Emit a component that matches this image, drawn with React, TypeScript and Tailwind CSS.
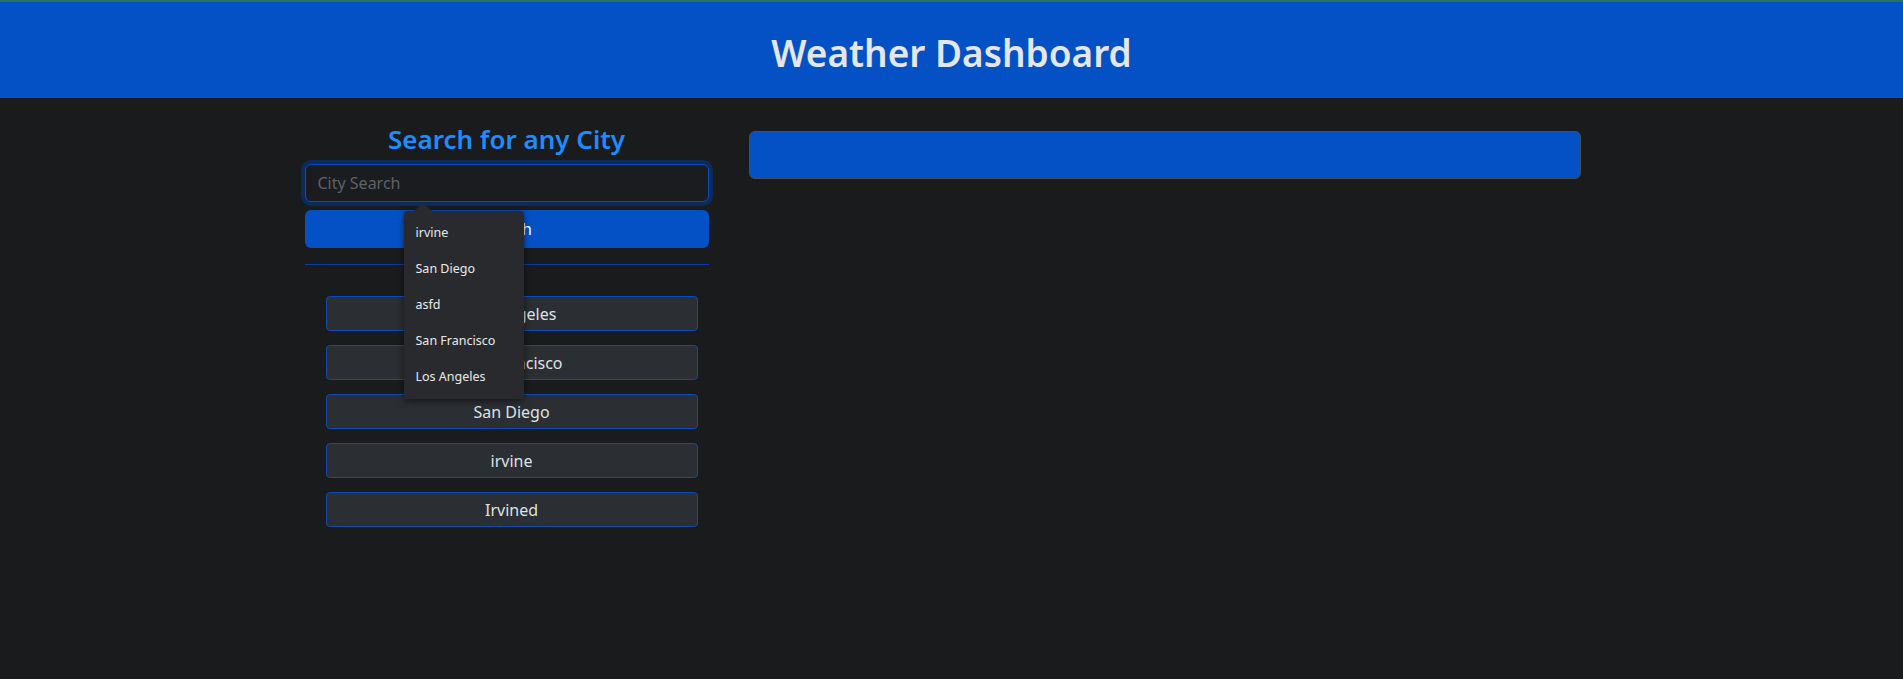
import React from 'react';

const savedCities = ['Los Angeles', 'San Francisco', 'San Diego', 'irvine', 'Irvined'];
const suggestions = ['irvine', 'San Diego', 'asfd', 'San Francisco', 'Los Angeles'];

const SearchPanel: React.FC = () => {
  return (
    <div className="w-[404px] shrink-0 pt-[26px]">
      <h3 className="text-center text-[26px] leading-[1.2] font-semibold text-[#1e8cff]">Search for any City</h3>
      <div className="relative mt-[9px]">
        <input
          type="text"
          placeholder="City Search"
          className="block w-full h-[38px] px-3 rounded-md bg-[#1b1c1f] border border-[#0b4cba] ring-4 ring-[#0c2a5c] text-[16px] text-[#dee2e6] placeholder:text-[#5f6165] outline-none"
        />
        {/* browser datalist popup */}
        <div className="absolute left-[99px] top-[47px] z-10 w-[120px] py-1 rounded-[4px] bg-[#292a2e] shadow-[0_2px_6px_rgba(0,0,0,0.55)]">
          <svg className="absolute left-[10px] -top-[8px]" width="18" height="8" viewBox="0 0 18 8">
            <path d="M0 8 L9 0 L18 8 Z" fill="#292a2e" />
          </svg>
          {suggestions.map((s) => (
            <div key={s} className="h-9 px-3 flex items-center text-[12.5px] text-[#e8eaed]">
              {s}
            </div>
          ))}
        </div>
      </div>
      <button className="mt-2 w-full h-[38px] rounded-md bg-[#0351c4] text-[16px] text-white">Search</button>
      <hr className="mt-4 border-0 border-t border-[#0b3d9c]" />
      <div className="mt-[31px] pl-[21px] pr-[11px] flex flex-col gap-[14px]">
        {savedCities.map((city) => (
          <button
            key={city}
            className="h-[35px] w-full rounded-[4px] bg-[#2b2e32] border border-[#0b4cba] text-[16px] text-[#dee2e6]"
          >
            {city}
          </button>
        ))}
      </div>
    </div>
  );
};

const App: React.FC = () => {
  return (
    <div className="min-h-[679px] bg-[#1a1b1d] font-['Noto_Sans','Open_Sans',sans-serif]">
      <header className="h-[98px] pt-[6px] bg-[#0351c4] border-t-2 border-[#27705f] flex items-center justify-center">
        <h1 className="text-[37px] leading-[1.2] font-semibold text-[#e4e6e8]">Weather Dashboard</h1>
      </header>
      <main className="mx-auto w-[1320px] px-[13px] flex gap-10">
        <SearchPanel />
        <div className="w-[832px] h-[48px] mt-[33px] rounded-md bg-[#0351c4] border border-[#4a4d52]" />
      </main>
    </div>
  );
};

export default App;
